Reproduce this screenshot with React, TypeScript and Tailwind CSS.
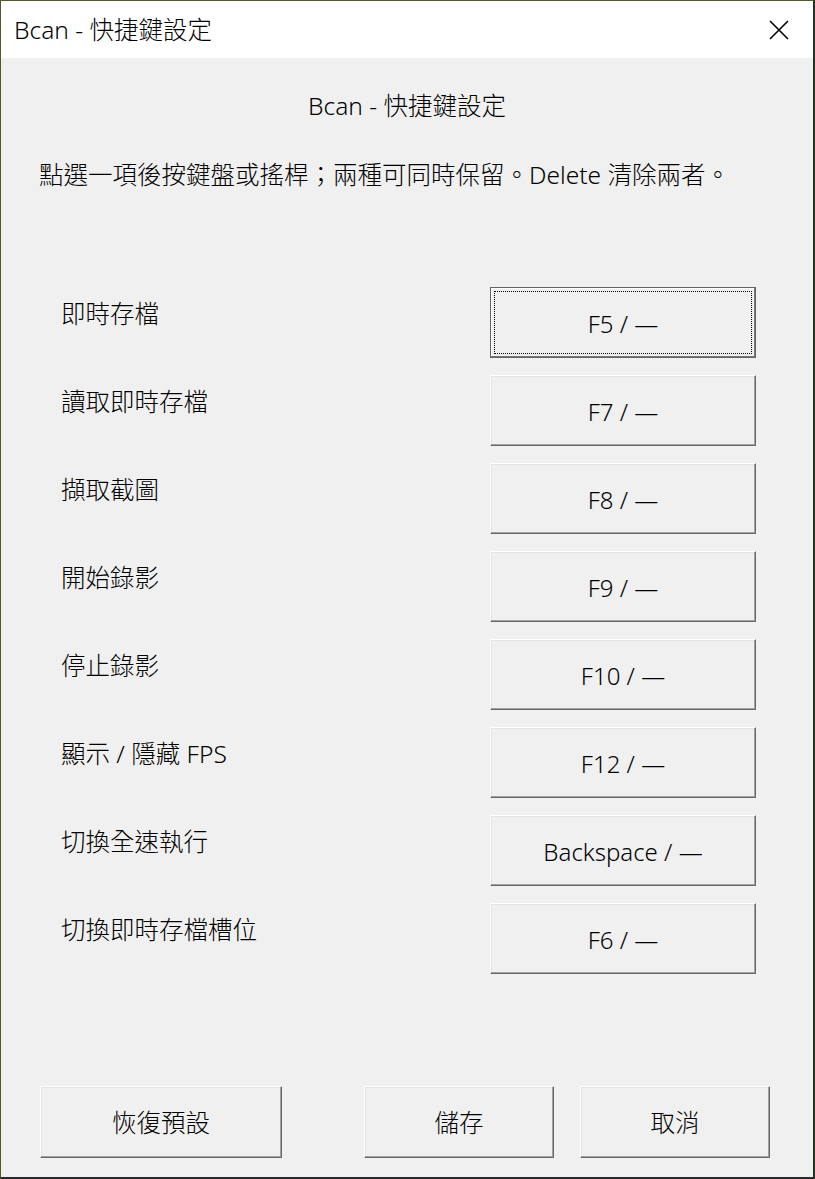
import React from 'react';

const rows: [string, string][] = [
  ['即時存檔', 'F5 / —'],
  ['讀取即時存檔', 'F7 / —'],
  ['擷取截圖', 'F8 / —'],
  ['開始錄影', 'F9 / —'],
  ['停止錄影', 'F10 / —'],
  ['顯示 / 隱藏 FPS', 'F12 / —'],
  ['切換全速執行', 'Backspace / —'],
  ['切換即時存檔槽位', 'F6 / —'],
];

const btn =
  'relative flex items-center justify-center bg-[#f0f0f0] text-black border border-t-white border-l-white border-b-[#696969] border-r-[#696969] shadow-[inset_-1px_-1px_#a0a0a0,inset_1px_1px_#e3e3e3]';

const KeyButton = ({ label, focused }: { label: string; focused?: boolean }) => {
  if (focused) {
    return (
      <div className="relative flex h-[71px] w-[266px] items-center justify-center border border-[#646464] bg-[#f0f0f0] text-black shadow-[inset_-1px_-1px_#7a7a7a,inset_1px_1px_#ffffff]">
        <div className="absolute inset-[3px] border border-dotted border-black" />
        <span className="pt-[3px]">{label}</span>
      </div>
    );
  }
  return (
    <div className={`${btn} h-[71px] w-[266px]`}>
      <span className="pt-[3px]">{label}</span>
    </div>
  );
};

export default function App() {
  return (
    <div
      className="flex h-[1179px] w-[815px] flex-col border-t border-l border-r-2 border-b-2 border-t-[#4d5a2c] border-l-[#4d5a2c] border-r-[#283020] border-b-[#2a2a2e] bg-[#f0f0f0] text-[24px] font-light leading-[32px] text-black"
      style={{ fontFamily: '"Noto Sans", "Noto Sans CJK TC", sans-serif' }}
    >
      {/* Title bar */}
      <div className="flex h-[57px] shrink-0 items-center justify-between bg-white pl-[13px] pr-[24px]">
        <span className="text-[24.5px] text-black">Bcan - 快捷鍵設定</span>
        <svg width="20" height="20" viewBox="0 0 20 20" className="text-black">
          <path d="M1 1 L19 19 M19 1 L1 19" stroke="currentColor" strokeWidth="1.6" fill="none" />
        </svg>
      </div>

      {/* Body */}
      <div className="flex flex-1 flex-col px-[38px] pt-[32px]">
        <div className="text-center text-[24.5px]">Bcan - 快捷鍵設定</div>
        <div className="mt-[37px] text-[24.5px]">點選一項後按鍵盤或搖桿；兩種可同時保留。Delete 清除兩者。</div>

        <div className="mt-[96px] flex flex-col gap-[17px] pl-[22px] pr-[19px]">
          {rows.map(([name, key], i) => (
            <div key={name} className="flex items-start justify-between">
              <span className="pt-[11px] text-[24.5px]">{name}</span>
              <KeyButton label={key} focused={i === 0} />
            </div>
          ))}
        </div>

        <div className="mt-auto mb-[19px] flex items-center pl-[1px] pr-[5px]">
          <div className={`${btn} h-[72px] w-[242px]`}>
            <span className="pt-[1px] text-[24.5px]">恢復預設</span>
          </div>
          <div className="flex-1" />
          <div className={`${btn} h-[72px] w-[190px]`}>
            <span className="pt-[1px] text-[24.5px]">儲存</span>
          </div>
          <div className={`${btn} ml-[26px] h-[72px] w-[190px]`}>
            <span className="pt-[1px] text-[24.5px]">取消</span>
          </div>
        </div>
      </div>
    </div>
  );
}
